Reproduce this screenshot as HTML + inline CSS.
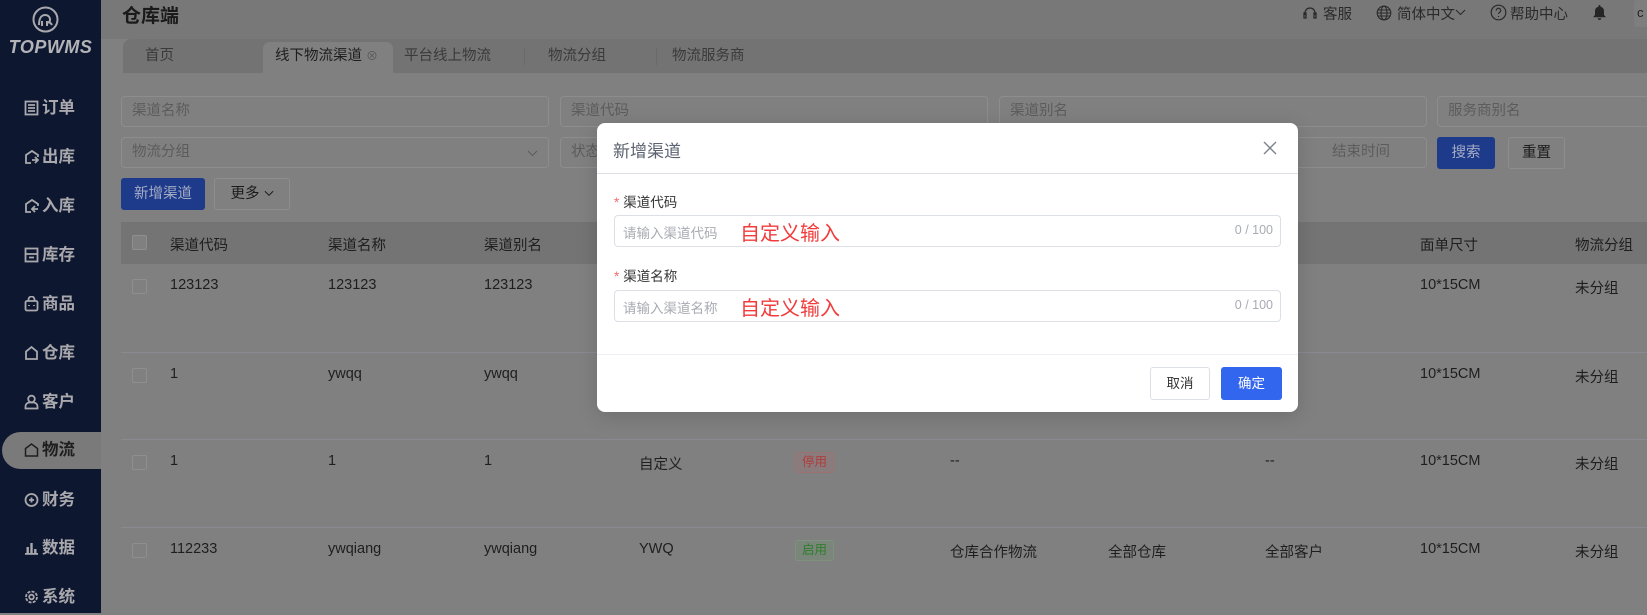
<!DOCTYPE html>
<html><head><meta charset="utf-8"><style>
*{box-sizing:border-box;margin:0;padding:0}
body{width:1647px;height:613px;overflow:hidden;background:#808080;font-family:"Liberation Sans","Noto Sans CJK SC",sans-serif;font-size:14.5px;color:#1e1e1e;position:relative}
.abs{position:absolute}
.side{left:0;top:0;width:101px;height:613px;background:#0e1730}
.si{position:absolute;left:0;width:101px;height:36px;line-height:36px;color:#a9a9ad;font-weight:bold;font-size:16.5px;padding-left:24px;white-space:nowrap}
.si svg{vertical-align:-3px;margin-right:3px}
.hdr{left:101px;top:0;width:1546px;height:39px;background:#787878}
.tabs{left:123px;top:39px;width:1524px;height:34px;background:#737373;border-top-left-radius:8px}
.tab{position:absolute;top:0;height:34px;line-height:34px;color:#3a3a3a}
.inp{position:absolute;height:31px;border:1px solid #8d8d8d;border-radius:4px;background:#808080;color:#5c5c5c;line-height:29px;padding-left:10px}
.btn{position:absolute;height:32px;line-height:30px;border-radius:3px;text-align:center}
.th{left:121px;top:222px;width:1526px;height:42px;background:#747474}
.row{position:absolute;left:121px;width:1526px;border-top:1px solid #8a8b92}
.c{position:absolute;white-space:nowrap}
.cb{position:absolute;left:11px;width:15px;height:15px;border:1px solid #8f8f8f;border-radius:2px;background:#808080}
.modal{left:597px;top:123px;width:701px;height:289px;background:#fff;border-radius:8px;box-shadow:0 4px 20px rgba(0,0,0,.15)}
.minp{position:absolute;left:17px;width:667px;height:32px;border:1px solid #dcdfe6;border-radius:4px}
.ph{position:absolute;left:8px;top:6px;color:#a8abb2;font-size:13.5px}
.red{position:absolute;left:125px;top:1px;color:#f23c3c;font-size:20px}
.cnt{position:absolute;right:7px;top:7px;color:#a8abb2;font-size:12.5px}
.lab{position:absolute;left:17px;font-size:13.5px;color:#333}
.lab b{color:#f56c6c;font-weight:normal;margin-right:4px}
.hi{position:absolute;top:3px;color:#2a2a2a;font-size:14.5px;white-space:nowrap}
</style></head><body>
<div class="abs side">
  <svg class="abs" style="left:32px;top:6px" width="27" height="27" viewBox="0 0 27 27" fill="none" stroke="#a9a9ad" stroke-width="2"><circle cx="13.5" cy="13.5" r="12"/><path d="M7 19c0-6 2-10 6-10 3 0 5 2 5 5 0 2-2 3-3 2M10 20v-5M15 20v-4c2 0 4 1 5 3"/></svg>
  <div class="abs" style="left:0;top:37px;width:101px;text-align:center;color:#b4b4b8;font-style:italic;font-weight:bold;font-size:18px;letter-spacing:0.5px">TOPWMS</div>
  <div class="si" style="top:90px"><svg width="15" height="16" viewBox="0 0 15 16" fill="none" stroke="#a9a9ad" stroke-width="1.8"><rect x="1.5" y="1.5" width="12" height="13"/><path d="M4 5h7M4 8h7M4 11h7"/></svg>订单</div>
  <div class="si" style="top:139px"><svg width="15" height="16" viewBox="0 0 15 16" fill="none" stroke="#a9a9ad" stroke-width="1.8"><path d="M7 14H2V6l6-4 6 4v2M8 11h6M11 8l3 3-3 3"/></svg>出库</div>
  <div class="si" style="top:188px"><svg width="15" height="16" viewBox="0 0 15 16" fill="none" stroke="#a9a9ad" stroke-width="1.8"><path d="M7 14H2V6l6-4 6 4v2M14 11H8M11 8l-3 3 3 3"/></svg>入库</div>
  <div class="si" style="top:237px"><svg width="15" height="16" viewBox="0 0 15 16" fill="none" stroke="#a9a9ad" stroke-width="1.8"><rect x="1.5" y="1.5" width="12" height="13"/><path d="M1.5 7h12M5 10.5h5"/></svg>库存</div>
  <div class="si" style="top:286px"><svg width="15" height="16" viewBox="0 0 15 16" fill="none" stroke="#a9a9ad" stroke-width="1.8"><rect x="1.5" y="5" width="12" height="9.5" rx="1.5"/><path d="M4.5 5V3.5a3 3 0 016 0V5M5 9v1M10 9v1"/></svg>商品</div>
  <div class="si" style="top:335px"><svg width="15" height="16" viewBox="0 0 15 16" fill="none" stroke="#a9a9ad" stroke-width="1.8"><path d="M2 14V6.5L7.5 2 13 6.5V14z"/></svg>仓库</div>
  <div class="si" style="top:384px"><svg width="15" height="16" viewBox="0 0 15 16" fill="none" stroke="#a9a9ad" stroke-width="1.8"><circle cx="7.5" cy="5" r="3.3"/><path d="M1.5 14.5v-2a4 4 0 014-4h4a4 4 0 014 4v2z"/></svg>客户</div>
  <div class="abs" style="left:2px;top:432px;width:99px;height:37px;background:#7a7a7a;border-radius:19px 0 0 19px"></div>
  <div class="si" style="top:432px;color:#1e1e1e"><svg width="15" height="16" viewBox="0 0 15 16" fill="none" stroke="#1e1e1e" stroke-width="1.5"><path d="M1.5 14V6.5L7.5 2l6 4.5V14z"/></svg>物流</div>
  <div class="si" style="top:482px"><svg width="15" height="16" viewBox="0 0 15 16" fill="none" stroke="#a9a9ad" stroke-width="1.8"><circle cx="7.5" cy="8" r="6"/><path d="M5 8h5M7.5 5.5v5"/></svg>财务</div>
  <div class="si" style="top:530px"><svg width="15" height="16" viewBox="0 0 15 16" fill="#a9a9ad"><rect x="1" y="13" width="13" height="1.8"/><rect x="2.5" y="7" width="2.4" height="6"/><rect x="6.3" y="3" width="2.4" height="10"/><rect x="10.1" y="9" width="2.4" height="4"/></svg>数据</div>
  <div class="si" style="top:579px"><svg width="15" height="16" viewBox="0 0 15 16" fill="none" stroke="#a9a9ad" stroke-width="1.8"><circle cx="7.5" cy="8" r="2.3"/><circle cx="7.5" cy="8" r="5.5" stroke-dasharray="3 1.3"/></svg>系统</div>
</div>
<div class="abs hdr"></div>
<div class="abs" style="left:122px;top:1px;font-size:19px;font-weight:bold;color:#1a1a1a">仓库端</div>
<svg class="abs" style="left:1302px;top:5px" width="16" height="16" viewBox="0 0 16 16" fill="none" stroke="#2a2a2a" stroke-width="1.3"><path d="M3 10V8a5 5 0 0110 0v2"/><path d="M2 8h2v5H2zM12 8h2v5h-2z"/></svg>
<div class="hi" style="left:1323px">客服</div>
<svg class="abs" style="left:1376px;top:5px" width="16" height="16" viewBox="0 0 16 16" fill="none" stroke="#2a2a2a" stroke-width="1.1"><circle cx="8" cy="8" r="6.8"/><ellipse cx="8" cy="8" rx="3" ry="6.8"/><path d="M1.2 8h13.6M2 5h12M2 11h12"/></svg>
<div class="hi" style="left:1397px">简体中文</div>
<svg class="abs" style="left:1455px;top:9px" width="11" height="7" viewBox="0 0 11 7" fill="none" stroke="#2a2a2a" stroke-width="1.1"><path d="M1 1l4.5 4.5L10 1"/></svg>
<svg class="abs" style="left:1490px;top:4px" width="17" height="17" viewBox="0 0 17 17" fill="none" stroke="#2a2a2a" stroke-width="1.2"><circle cx="8.5" cy="8.5" r="7.3"/><path d="M6.3 6.5a2.2 2.2 0 114 1.2c-.8.6-1.8 1-1.8 2.3M8.5 12v1"/></svg>
<div class="hi" style="left:1510px">帮助中心</div>
<svg class="abs" style="left:1592px;top:4px" width="15" height="16" viewBox="0 0 15 16" fill="#252525"><path d="M7.5 1a1 1 0 011 1v.6A4.5 4.5 0 0112 7v4l1.5 1.5v.8h-12v-.8L3 11V7a4.5 4.5 0 013.5-4.4V2a1 1 0 011-1zM5.8 14.2h3.4a1.7 1.7 0 01-3.4 0z"/></svg>
<div class="abs" style="left:1634px;top:0;width:13px;height:27px;background:#7e7e7e;border-radius:3px 0 0 3px;color:#222;font-size:13px;line-height:26px;padding-left:3px">c</div>
<div class="abs tabs"></div>
<div class="tab" style="left:145px;top:39px">首页</div>
<div class="abs" style="left:263px;top:42px;width:130px;height:31px;background:#808080;border-radius:7px 7px 0 0"></div>
<div class="tab" style="left:275px;top:39px;color:#1e1e1e">线下物流渠道 <span style="color:#5a5a5a;font-size:12px">⊗</span></div>
<div class="tab" style="left:404px;top:39px">平台线上物流</div>
<div class="abs" style="left:524px;top:48px;width:1px;height:17px;background:#6a6a6a"></div>
<div class="tab" style="left:548px;top:39px">物流分组</div>
<div class="abs" style="left:656px;top:48px;width:1px;height:17px;background:#6a6a6a"></div>
<div class="tab" style="left:672px;top:39px">物流服务商</div>

<div class="inp" style="left:121px;top:96px;width:428px">渠道名称</div>
<div class="inp" style="left:560px;top:96px;width:428px">渠道代码</div>
<div class="inp" style="left:999px;top:96px;width:428px">渠道别名</div>
<div class="inp" style="left:1437px;top:96px;width:220px">服务商别名</div>
<div class="inp" style="left:121px;top:137px;width:428px">物流分组<svg style="position:absolute;right:10px;top:12px" width="11" height="7" viewBox="0 0 11 7" fill="none" stroke="#5c5c5c" stroke-width="1.1"><path d="M1 1l4.5 4.5L10 1"/></svg></div>
<div class="inp" style="left:560px;top:137px;width:428px">状态</div>
<div class="inp" style="left:999px;top:137px;width:428px;padding-left:332px">结束时间</div>
<div class="btn" style="left:1437px;top:137px;width:58px;background:#1e3a8a;color:#a4abc4;border:1px solid #1e3a8a">搜索</div>
<div class="btn" style="left:1508px;top:137px;width:57px;border:1px solid #8d8d8d;color:#1a1a1a">重置</div>
<div class="btn" style="left:121px;top:178px;width:84px;background:#1e3a8a;color:#a4abc4;border:1px solid #1e3a8a">新增渠道</div>
<div class="btn" style="left:214px;top:178px;width:76px;border:1px solid #8d8d8d;color:#1a1a1a">更多 <svg width="10" height="7" viewBox="0 0 11 7" fill="none" stroke="#1a1a1a" stroke-width="1.1" style="vertical-align:1px"><path d="M1 1l4.5 4.5L10 1"/></svg></div>

<div class="abs th"></div>
<div class="row" style="top:222px;height:42px;border:none">
 <div class="cb" style="top:13px"></div>
 <div class="c" style="left:49px;top:12px">渠道代码</div><div class="c" style="left:207px;top:12px">渠道名称</div><div class="c" style="left:363px;top:12px">渠道别名</div>
 <div class="c" style="left:1144px;top:12px">客户</div><div class="c" style="left:1299px;top:12px">面单尺寸</div><div class="c" style="left:1454px;top:12px">物流分组</div>
</div>
<div class="row" style="top:264px;height:88px;border:none">
 <div class="cb" style="top:15px"></div>
 <div class="c" style="left:49px;top:13px">123123</div><div class="c" style="left:207px;top:13px">123123</div><div class="c" style="left:363px;top:13px">123123</div>
 <div class="c" style="left:1299px;top:13px">10*15CM</div><div class="c" style="left:1454px;top:13px">未分组</div>
</div>
<div class="row" style="top:352px;height:87px">
 <div class="cb" style="top:15px"></div>
 <div class="c" style="left:49px;top:13px">1</div><div class="c" style="left:207px;top:13px">ywqq</div><div class="c" style="left:363px;top:13px">ywqq</div>
 <div class="c" style="left:1144px;top:13px">客户</div><div class="c" style="left:1299px;top:13px">10*15CM</div><div class="c" style="left:1454px;top:13px">未分组</div>
</div>
<div class="row" style="top:439px;height:88px">
 <div class="cb" style="top:15px"></div>
 <div class="c" style="left:49px;top:13px">1</div><div class="c" style="left:207px;top:13px">1</div><div class="c" style="left:363px;top:13px">1</div>
 <div class="c" style="left:518px;top:13px">自定义</div>
 <div class="c" style="left:674px;top:12px;height:21px;line-height:19px;padding:0 6px;font-size:12.5px;color:#b23a3a;background:#8a7c7c;border:1px solid #9a7272;border-radius:3px">停用</div>
 <div class="c" style="left:829px;top:13px">--</div><div class="c" style="left:1144px;top:13px">--</div>
 <div class="c" style="left:1299px;top:13px">10*15CM</div><div class="c" style="left:1454px;top:13px">未分组</div>
</div>
<div class="row" style="top:527px;height:86px">
 <div class="cb" style="top:15px"></div>
 <div class="c" style="left:49px;top:13px">112233</div><div class="c" style="left:207px;top:13px">ywqiang</div><div class="c" style="left:363px;top:13px">ywqiang</div>
 <div class="c" style="left:518px;top:13px">YWQ</div>
 <div class="c" style="left:674px;top:12px;height:21px;line-height:19px;padding:0 6px;font-size:12.5px;color:#2d7d2d;background:#7a867a;border:1px solid #7f927f;border-radius:3px">启用</div>
 <div class="c" style="left:829px;top:13px">仓库合作物流</div><div class="c" style="left:987px;top:13px">全部仓库</div><div class="c" style="left:1144px;top:13px">全部客户</div>
 <div class="c" style="left:1299px;top:13px">10*15CM</div><div class="c" style="left:1454px;top:13px">未分组</div>
</div>

<div class="abs modal">
 <div class="abs" style="left:16px;top:14px;font-size:17px;color:#5c6370">新增渠道</div>
 <svg class="abs" style="left:666px;top:18px" width="14" height="14" viewBox="0 0 14 14" stroke="#7d828c" stroke-width="1.4"><path d="M1 1l12 12M13 1L1 13"/></svg>
 <div class="abs" style="left:0;top:50px;width:701px;height:1px;background:#dcdfe6"></div>
 <div class="lab" style="top:68px"><b>*</b>渠道代码</div>
 <div class="minp" style="top:92px"><span class="ph">请输入渠道代码</span><span class="red">自定义输入</span><span class="cnt">0 / 100</span></div>
 <div class="lab" style="top:142px"><b>*</b>渠道名称</div>
 <div class="minp" style="top:167px"><span class="ph">请输入渠道名称</span><span class="red">自定义输入</span><span class="cnt">0 / 100</span></div>
 <div class="abs" style="left:0;top:231px;width:701px;height:1px;background:#ebeef5"></div>
 <div class="btn" style="left:553px;top:244px;width:60px;height:33px;border:1px solid #dcdfe6;color:#333;font-size:13.5px;line-height:31px">取消</div>
 <div class="btn" style="left:624px;top:244px;width:61px;height:33px;background:#3366ee;color:#fff;font-size:13.5px;line-height:33px">确定</div>
</div>
</body></html>
